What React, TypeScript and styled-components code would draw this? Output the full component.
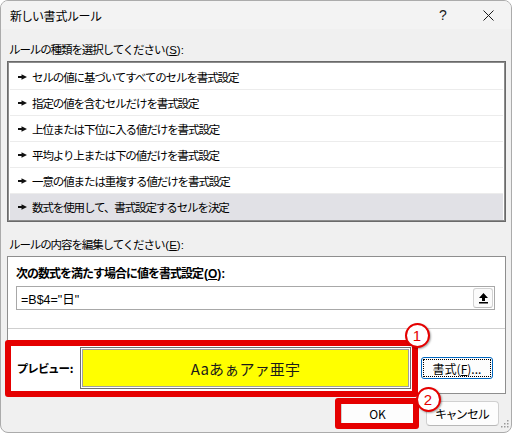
import React from "react";
import styled, { createGlobalStyle } from "styled-components";

const Global = createGlobalStyle`
  html, body { margin: 0; padding: 0; background: #ffffff; }
  body {
    font-family: "Noto Sans CJK JP", "Noto Sans", sans-serif;
    font-size: 12px;
    font-feature-settings: "palt";
    color: #000;
  }
  * { box-sizing: border-box; }
`;

const Window = styled.div`
  position: relative;
  width: 512px;
  height: 433px;
  background: #f0f0f0;
  border: 1px solid #ababab;
  border-radius: 8px;
  overflow: hidden;
  display: flex;
  flex-direction: column;
`;

const TitleBar = styled.div`
  height: 28px;
  flex: none;
  background: #f3f3f3;
  display: flex;
  align-items: center;
  padding-left: 9px;
`;

const Title = styled.div`
  flex: 1;
  font-size: 12px;
  line-height: 16px;
  margin-top: 1px;
`;

const TitleButton = styled.div<{ $w: number }>`
  width: ${(p) => p.$w}px;
  height: 28px;
  display: flex;
  align-items: center;
  justify-content: center;
  font-family: "Liberation Sans", sans-serif;
  font-size: 14px;
  color: #1a1a1a;
`;

const Body = styled.div`
  flex: 1;
  display: flex;
  flex-direction: column;
  padding: 0 5px 0 6px;
`;

const SectionLabel = styled.div<{ $mt: number }>`
  margin-top: ${(p) => p.$mt}px;
  line-height: 16px;
  height: 16px;
  padding-left: 2px;
  font-size: 11.5px;
  letter-spacing: -1.1px;
  font-feature-settings: normal;
  white-space: nowrap;
`;

const Mnemonic = styled.span`
  letter-spacing: 0;
  font-family: "Liberation Sans", "Noto Sans CJK JP", sans-serif;
  margin-left: 1px;
`;

const RuleList = styled.div`
  margin-top: 4px;
  height: 161px;
  border: 1px solid #6a6a6a;
  box-shadow: inset 0 0 0 1px #8c8c8c;
  background: #fff;
  padding: 2px 2px 1px 2px;
  display: flex;
  flex-direction: column;
`;

const RuleRow = styled.div<{ $selected?: boolean }>`
  height: 26px;
  flex: none;
  display: flex;
  align-items: center;
  padding-left: 8px;
  gap: 5px;
  font-size: 11.5px;
  letter-spacing: -1.1px;
  font-feature-settings: normal;
  background: ${(p) => (p.$selected ? "#e1e1e6" : "#ffffff")};
  border-bottom: 1px solid ${(p) => (p.$selected ? "#e1e1e6" : "#ececec")};
  white-space: nowrap;
`;

const Panel = styled.div`
  margin-top: 4px;
  height: 138px;
  background: #fff;
  border: 1px solid #8e8e8e;
  display: flex;
  flex-direction: column;
  padding-top: 8px;
`;

const BoldLabel = styled.div`
  font-weight: bold;
  font-size: 12px;
  letter-spacing: -1px;
  font-feature-settings: normal;
  line-height: 16px;
  padding-left: 8px;
  white-space: nowrap;
`;

const FormulaBox = styled.div`
  margin: 4px 10px 0 8px;
  height: 24px;
  border: 1px solid #a8a8a8;
  display: flex;
  align-items: center;
  padding: 0 1px 0 4px;
  font-family: "Liberation Sans", "Noto Sans CJK JP", sans-serif;
  font-size: 12.5px;
`;

const FormulaText = styled.div`
  flex: 1;
  white-space: nowrap;
`;

const CollapseButton = styled.div`
  width: 20px;
  height: 20px;
  border: 1px solid #d2d2d2;
  border-bottom-color: #bdbdbd;
  border-radius: 3px;
  background: #fbfbfb;
  display: flex;
  align-items: center;
  justify-content: center;
`;

const Separator = styled.div`
  margin: 18px 0 0 0;
  height: 1px;
  background: #cfcfcf;
`;

const PreviewRow = styled.div`
  display: flex;
  align-items: center;
  padding: 18px 0 0 9px;
`;

const PreviewLabel = styled.div`
  width: 63px;
  font-weight: bold;
  font-size: 11.5px;
  white-space: nowrap;
`;

const PreviewFrame = styled.div`
  width: 331px;
  height: 42px;
  border: 1px solid #6e6e6e;
  padding: 1px;
  background: #fff;
`;

const PreviewSample = styled.div`
  height: 100%;
  border: 1px solid #a0a0a0;
  background: #ffff00;
  display: flex;
  align-items: center;
  justify-content: center;
  font-size: 15px;
  letter-spacing: 0.2px;
  font-feature-settings: normal;
  color: #1a1a1a;
`;

const FormatButton = styled.div`
  margin-left: 10px;
  width: 72px;
  height: 22px;
  border: 1px solid #0067c0;
  border-radius: 3px;
  background: #fdfdfd;
  padding: 1px;
`;

const FocusRect = styled.div`
  height: 100%;
  border: 1px dotted #000;
  display: flex;
  align-items: center;
  justify-content: center;
  white-space: nowrap;
`;

const Footer = styled.div`
  margin-top: 7px;
  display: flex;
  justify-content: flex-end;
  gap: 12px;
  padding-right: 7px;
`;

const DialogButton = styled.div`
  width: 73px;
  height: 25px;
  border: 1px solid #d0d0d0;
  border-bottom-color: #b8b8b8;
  border-radius: 4px;
  background: #fdfdfd;
  display: flex;
  align-items: center;
  justify-content: center;
  white-space: nowrap;
`;

const Highlight = styled.div<{ $l: number; $t: number; $w: number; $h: number }>`
  position: absolute;
  left: ${(p) => p.$l}px;
  top: ${(p) => p.$t}px;
  width: ${(p) => p.$w}px;
  height: ${(p) => p.$h}px;
  border: 6px solid #e50000;
  border-radius: 3px;
  pointer-events: none;
`;

const Badge = styled.div<{ $cx: number; $cy: number }>`
  position: absolute;
  left: ${(p) => p.$cx - 12.5}px;
  top: ${(p) => p.$cy - 12.5}px;
  width: 25px;
  height: 25px;
  border-radius: 50%;
  border: 2px solid #e50000;
  background: #fff;
  color: #e50000;
  box-shadow: 1px 1px 2px rgba(0, 0, 0, 0.35);
  display: flex;
  align-items: center;
  justify-content: center;
  font-family: "Liberation Sans", sans-serif;
  font-size: 15px;
  line-height: 1;
`;

const Grip = styled.svg`
  position: absolute;
  right: 2px;
  bottom: 2px;
`;

const RuleArrow = () => (
  <svg width="9" height="6" viewBox="0 0 9 6">
    <polygon points="0,2 3.5,2 3.5,0.3 9,3 3.5,5.7 3.5,4 0,4" fill="#111" />
  </svg>
);

const UpArrow = () => (
  <svg width="11" height="12" viewBox="0 0 11 12">
    <polygon points="5.5,1 10,6 7,6 7,9 4,9 4,6 1,6" fill="#000" />
    <rect x="1" y="10" width="9" height="1.5" fill="#000" />
  </svg>
);

const CloseIcon = () => (
  <svg width="11" height="11" viewBox="0 0 11 11">
    <path d="M0.5 0.5 L10.5 10.5 M10.5 0.5 L0.5 10.5" stroke="#1a1a1a" strokeWidth="1" />
  </svg>
);

const rules = [
  "セルの値に基づいてすべてのセルを書式設定",
  "指定の値を含むセルだけを書式設定",
  "上位または下位に入る値だけを書式設定",
  "平均より上または下の値だけを書式設定",
  "一意の値または重複する値だけを書式設定",
  "数式を使用して、書式設定するセルを決定",
];

export default function App() {
  return (
    <>
      <Global />
      <Window>
        <TitleBar>
          <Title>新しい書式ルール</Title>
          <TitleButton $w={44}>?</TitleButton>
          <TitleButton $w={46}>
            <CloseIcon />
          </TitleButton>
        </TitleBar>
        <Body>
          <SectionLabel $mt={12}>
            ルールの種類を選択してください
            <Mnemonic>
              (<u>S</u>):
            </Mnemonic>
          </SectionLabel>
          <RuleList>
            {rules.map((r, i) => (
              <RuleRow key={r} $selected={i === rules.length - 1}>
                <RuleArrow />
                <span>{r}</span>
              </RuleRow>
            ))}
          </RuleList>
          <SectionLabel $mt={14}>
            ルールの内容を編集してください
            <Mnemonic>
              (<u>E</u>):
            </Mnemonic>
          </SectionLabel>
          <Panel>
            <BoldLabel>
              次の数式を満たす場合に値を書式設定
              <Mnemonic>
                (<u>O</u>):
              </Mnemonic>
            </BoldLabel>
            <FormulaBox>
              <FormulaText>=B$4="日"</FormulaText>
              <CollapseButton>
                <UpArrow />
              </CollapseButton>
            </FormulaBox>
            <Separator />
            <PreviewRow>
              <PreviewLabel>プレビュー:</PreviewLabel>
              <PreviewFrame>
                <PreviewSample>Aaあぁアァ亜宇</PreviewSample>
              </PreviewFrame>
              <FormatButton>
                <FocusRect>
                  書式(<u>F</u>)...
                </FocusRect>
              </FormatButton>
            </PreviewRow>
          </Panel>
          <Footer>
            <DialogButton>OK</DialogButton>
            <DialogButton>キャンセル</DialogButton>
          </Footer>
        </Body>
        <Highlight $l={4} $t={339} $w={413} $h={57} />
        <Highlight $l={334} $t={397} $w={84} $h={31} />
        <Badge $cx={416} $cy={334}>1</Badge>
        <Badge $cx={427} $cy={398}>2</Badge>
        <Grip width="10" height="10" viewBox="0 0 10 10">
          <rect x="8" y="0" width="1.5" height="1.5" fill="#9a9a9a" />
          <rect x="5" y="3" width="1.5" height="1.5" fill="#9a9a9a" />
          <rect x="8" y="3" width="1.5" height="1.5" fill="#9a9a9a" />
          <rect x="2" y="6" width="1.5" height="1.5" fill="#9a9a9a" />
          <rect x="5" y="6" width="1.5" height="1.5" fill="#9a9a9a" />
          <rect x="8" y="6" width="1.5" height="1.5" fill="#9a9a9a" />
        </Grip>
      </Window>
    </>
  );
}
